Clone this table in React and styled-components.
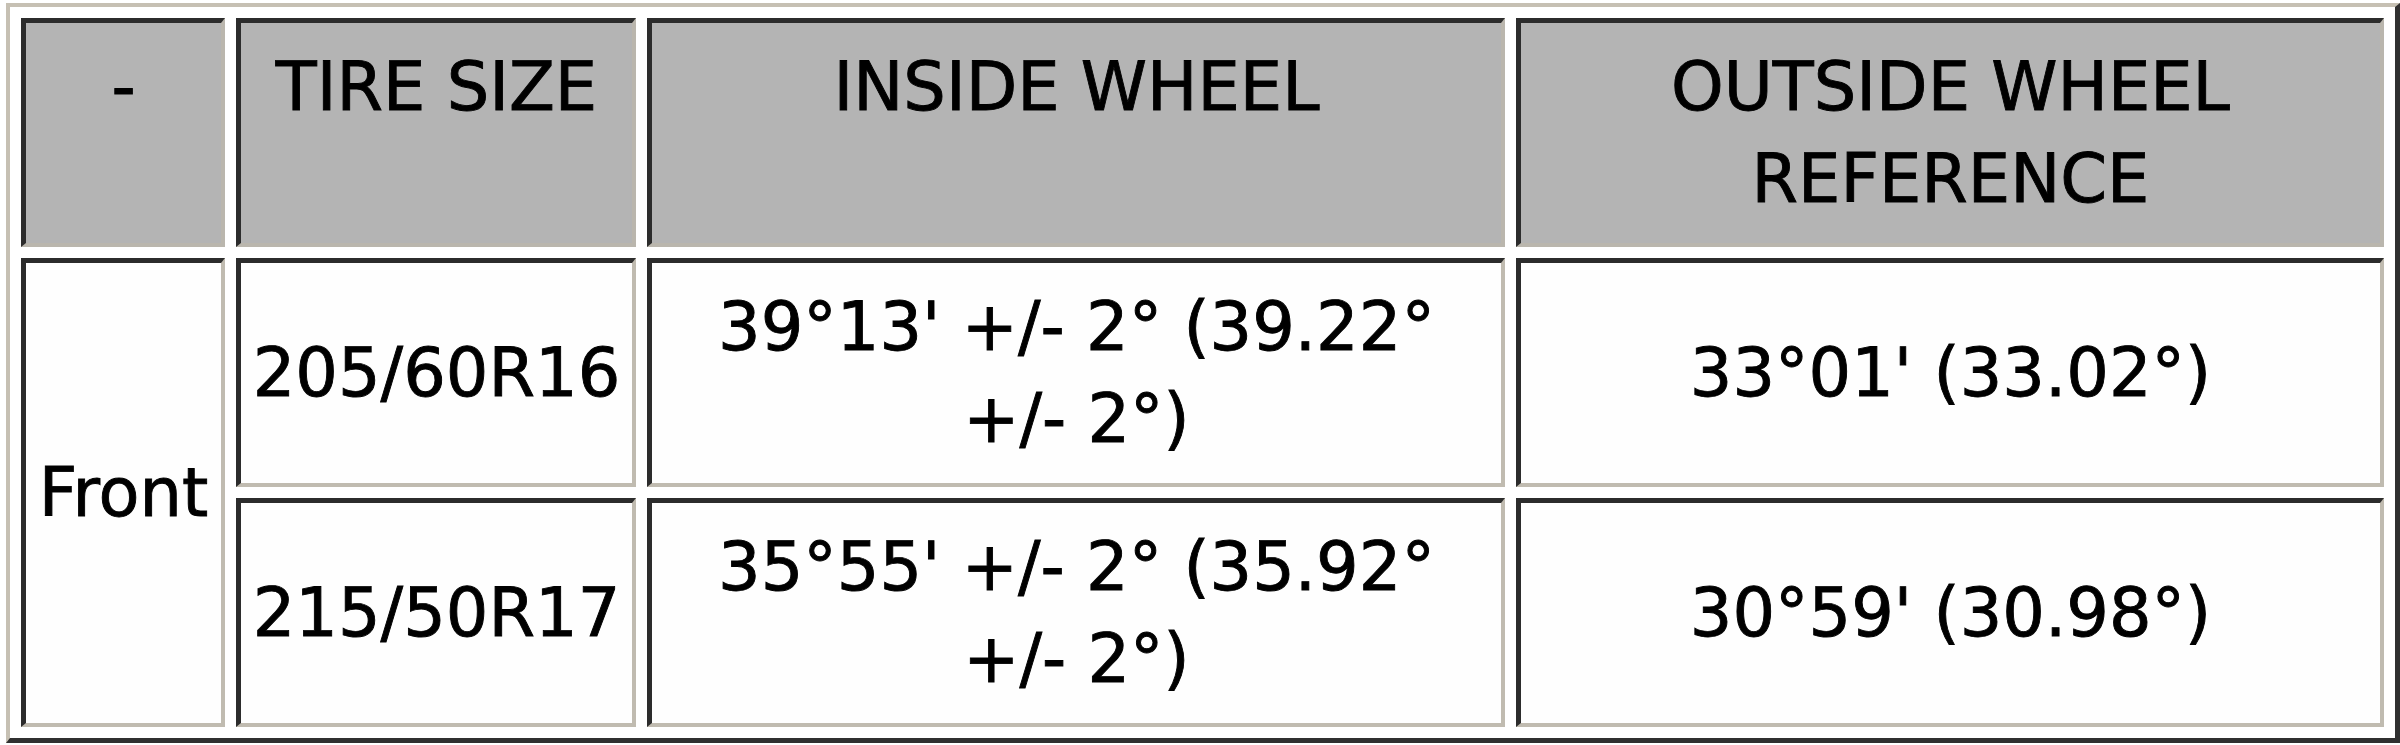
import React from "react";
import styled, { createGlobalStyle } from "styled-components";

const GlobalStyle = createGlobalStyle`
  html, body {
    margin: 0;
    padding: 0;
    background: #ffffff;
  }
`;

// column widths (outer box of each cell)
const COLS = [204, 400, 858, 868];

const rows = [
  { size: "205/60R16", inside: "39°13' +/- 2° (39.22° +/- 2°)", outside: "33°01' (33.02°)" },
  { size: "215/50R17", inside: "35°55' +/- 2° (35.92° +/- 2°)", outside: "30°59' (30.98°)" },
];

export default function App() {
  return (
    <>
      <GlobalStyle />
      <Table>
        <thead>
          <tr>
            <HeadCell $w={COLS[0]}>-</HeadCell>
            <HeadCell $w={COLS[1]}>TIRE SIZE</HeadCell>
            <HeadCell $w={COLS[2]}>INSIDE WHEEL</HeadCell>
            <HeadCell $w={COLS[3]}>OUTSIDE WHEEL REFERENCE</HeadCell>
          </tr>
        </thead>
        <tbody>
          {rows.map((r, i) => (
            <tr key={r.size}>
              {i === 0 && <Cell rowSpan={2}>Front</Cell>}
              <Cell>{r.size}</Cell>
              <Cell $pad={44}>{r.inside}</Cell>
              <Cell>{r.outside}</Cell>
            </tr>
          ))}
        </tbody>
      </Table>
    </>
  );
}

const Table = styled.table`
  box-sizing: border-box;
  width: 2394px;
  margin: 3px 0 0 6px;
  table-layout: fixed;
  border-collapse: separate;
  border-spacing: 11px;
  border-style: solid;
  border-width: 4px 5px 5px 4px;
  border-color: #c6c0b3 #303030 #303030 #c6c0b3;
  font-family: "DejaVu Sans", Verdana, sans-serif;
  font-size: 67px;
  line-height: 92px;
  color: #000;
  -webkit-text-stroke: 0.9px #000;
`;

const HeadCell = styled.th`
  box-sizing: border-box;
  width: ${(p) => p.$w}px;
  padding: 18px 10px;
  background: #b4b4b4;
  font-weight: normal;
  text-align: center;
  vertical-align: top;
  border-style: solid;
  border-width: 5px 4px 4px 5px;
  border-color: #2c2c2c #bab6ad #bab6ad #2c2c2c;
`;

const Cell = styled.td`
  box-sizing: border-box;
  padding: 18px ${(p) => p.$pad || 6}px;
  background: #fefefe;
  text-align: center;
  vertical-align: middle;
  border-style: solid;
  border-width: 5px 4px 4px 5px;
  border-color: #2c2c2c #c0bbb0 #c0bbb0 #2c2c2c;
`;
